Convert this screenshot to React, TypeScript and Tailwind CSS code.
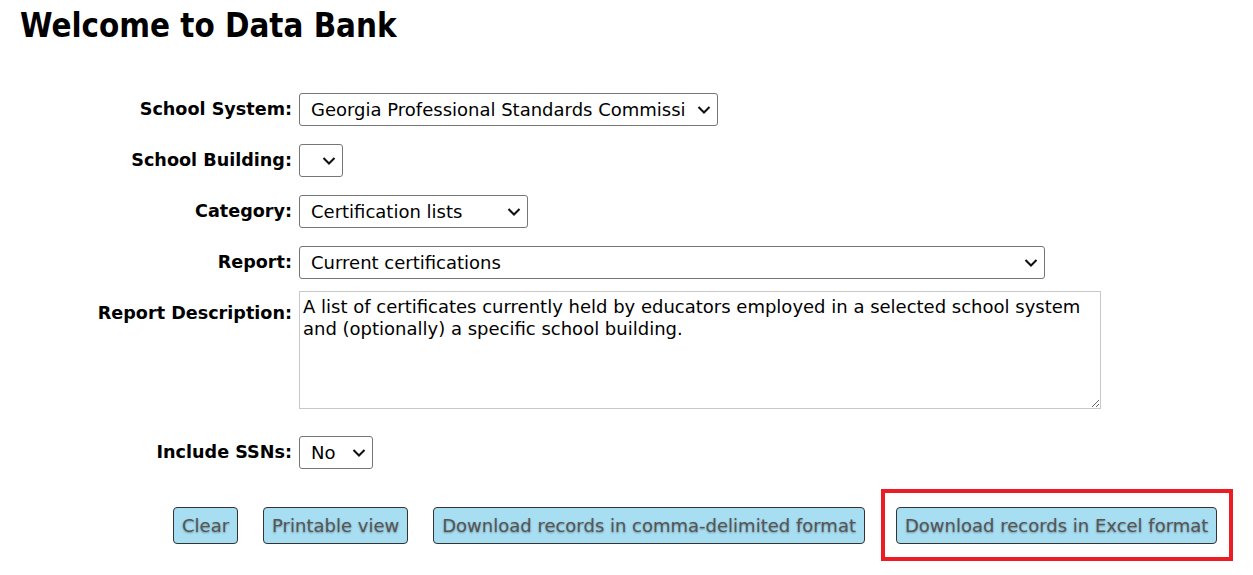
import { ReactNode } from "react";

function Chevron() {
  return (
    <svg
      viewBox="0 0 14 9"
      className="pointer-events-none absolute right-[7px] top-1/2 h-[9px] w-[14px] -translate-y-1/2"
    >
      <path d="M1.5 1.5 L7 7 L12.5 1.5" fill="none" stroke="#111" strokeWidth="2.1" />
    </svg>
  );
}

function Select({ value, width }: { value: string; width: string }) {
  return (
    <div className={`relative h-[33px] ${width}`}>
      <div className="flex h-full items-center overflow-hidden whitespace-nowrap rounded-[3px] border border-[#767676] bg-white pl-[11px] pr-[30px] text-[18px] text-black">
        {value}
      </div>
      <Chevron />
    </div>
  );
}

function Row({ label, children, top = false }: { label: string; children: ReactNode; top?: boolean }) {
  return (
    <div className={`flex gap-[7px] ${top ? "items-start" : "items-center"}`}>
      <div className={`w-[292px] text-right text-[17.6px] font-bold ${top ? "pt-[9px]" : ""}`}>{label}</div>
      {children}
    </div>
  );
}

function Btn({ children }: { children: ReactNode }) {
  return (
    <button className="h-[37px] rounded-[4px] border border-[#333] bg-[#a8def2] px-[8px] text-[18px] text-[#555] [text-shadow:0_1px_2px_rgba(0,0,0,0.35)]">
      {children}
    </button>
  );
}

export default function App() {
  return (
    <div className="min-h-[575px] bg-white text-black [font-family:'DejaVu_Sans',Verdana,sans-serif]">
      <h1 className="pl-[20px] pt-[6px] text-[32.8px] font-bold leading-[40px] [font-family:'DejaVu_Sans_Condensed','DejaVu_Sans',sans-serif]">
        Welcome to Data Bank
      </h1>

      <div className="mt-[47px] flex flex-col">
        <Row label="School System:">
          <Select value="Georgia Professional Standards Commissi" width="w-[419px]" />
        </Row>
        <div className="mt-[18px]">
          <Row label="School Building:">
            <Select value="" width="w-[44px]" />
          </Row>
        </div>
        <div className="mt-[18px]">
          <Row label="Category:">
            <Select value="Certification lists" width="w-[229px]" />
          </Row>
        </div>
        <div className="mt-[18px]">
          <Row label="Report:">
            <Select value="Current certifications" width="w-[746px]" />
          </Row>
        </div>
        <div className="mt-[12px]">
          <Row label="Report Description:" top>
            <textarea
              readOnly
              className="h-[118px] w-[802px] resize border border-[#c8c8c8] bg-white px-[3px] py-[4px] text-[18px] leading-[22px] text-black outline-none"
              value="A list of certificates currently held by educators employed in a selected school system and (optionally) a specific school building."
            />
          </Row>
        </div>
        <div className="mt-[27px]">
          <Row label="Include SSNs:">
            <Select value="No" width="w-[74px]" />
          </Row>
        </div>
      </div>

      <div className="mt-[20px] flex items-center pl-[173px]">
        <div className="flex gap-[25px]">
          <Btn>Clear</Btn>
          <Btn>Printable view</Btn>
          <Btn>Download records in comma-delimited format</Btn>
        </div>
        <div className="ml-[16px] border-[4px] border-[#ed1c24] pb-[13px] pl-[11px] pr-[12px] pt-[14px]">
          <Btn>Download records in Excel format</Btn>
        </div>
      </div>
    </div>
  );
}
